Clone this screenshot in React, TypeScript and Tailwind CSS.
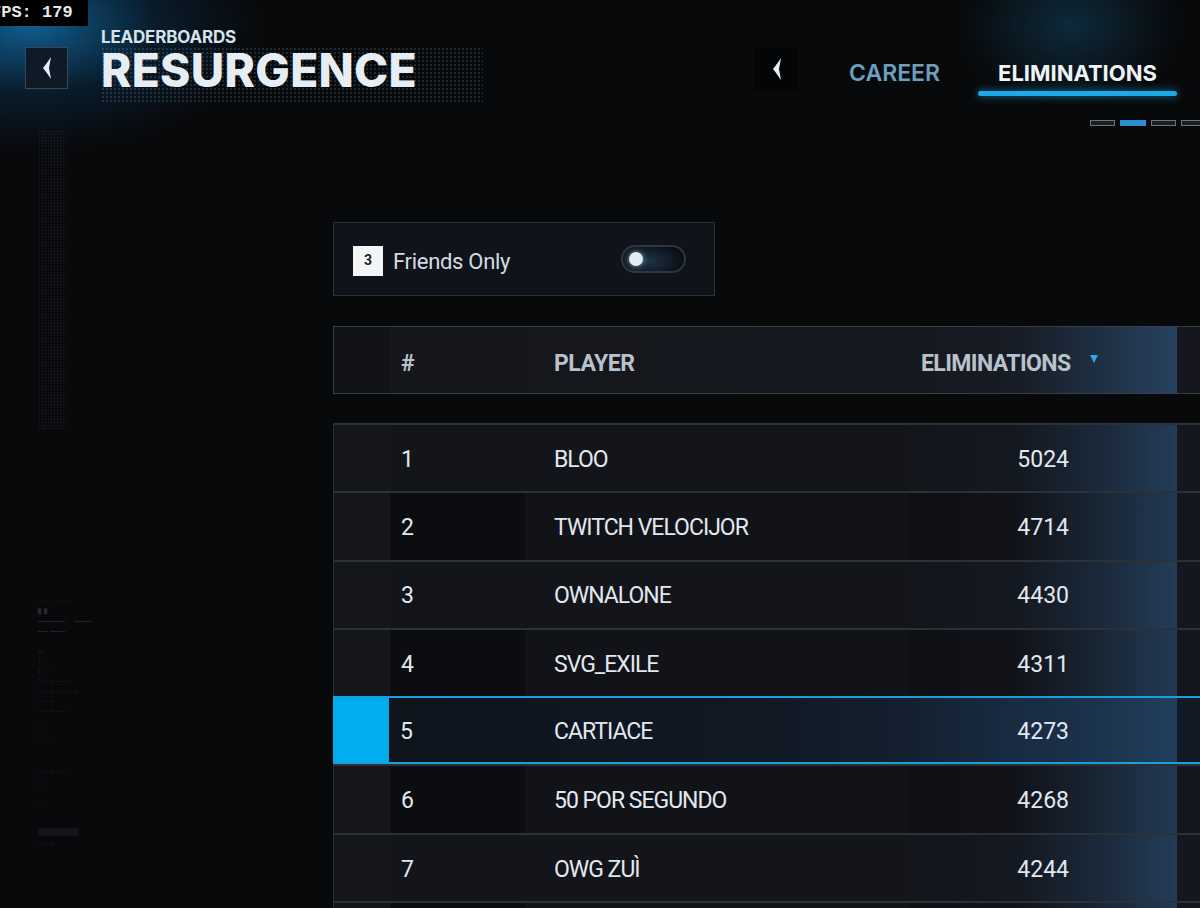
import React from "react";

const rows = [
  { n: "1", name: "BLOO", v: "5024" },
  { n: "2", name: "TWITCH VELOCIJOR", v: "4714" },
  { n: "3", name: "OWNALONE", v: "4430" },
  { n: "4", name: "SVG_EXILE", v: "4311" },
  { n: "5", name: "CARTIACE", v: "4273", sel: true },
  { n: "6", name: "50 POR SEGUNDO", v: "4268" },
  { n: "7", name: "OWG ZUÌ", v: "4244" },
  { n: "8", name: "", v: "" },
];

function Chevron() {
  return (
    <svg width="12" height="24" viewBox="0 0 12 24">
      <path d="M10 1 Q6 7 2 12 Q6 17 10 23 L8 12 Z" fill="#e6eef4" />
    </svg>
  );
}

function Row({ r, i }: { r: (typeof rows)[number]; i: number }) {
  const even = i % 2 === 1;
  if (r.sel) {
    return (
      <div className="flex h-[68.3px] w-[890px] border-y-2 border-[#1a9fdc] bg-[linear-gradient(90deg,#0e131b_0%,#111925_50%,#16273a_80%,#1d3650_100%)]">
        <div className="w-[57px] shrink-0 bg-[#00aef0] border-r border-[#0a0c10]" />
        <div className="w-[135px] shrink-0 flex items-center pl-[10px] pt-[4px] text-[23px] text-[#e2e8ef] tracking-[-0.5px]">{r.n}</div>
        <div className="w-[383px] shrink-0 flex items-center pl-[29px] pt-[4px] text-[23px] text-[#e2e8ef] tracking-[-1px]">{r.name}</div>
        <div className="w-[269px] shrink-0 flex items-center justify-end pr-[108px] pt-[4px] text-[23px] text-[#e2e8ef] bg-[linear-gradient(90deg,rgba(20,34,50,0)_0%,rgba(30,58,88,0.5)_70%,rgba(36,68,100,0.7)_100%)]">{r.v}</div>
        <div className="flex-1 bg-[#121a26]" />
      </div>
    );
  }
  return (
    <div className="flex h-[68.3px] w-[890px] border-t-2 border-[#2c3037] border-l border-l-[#2a2d33]">
      <div className="w-[56px] shrink-0 bg-[#14161c]" />
      <div className={`w-[135px] shrink-0 flex items-center pl-[11px] pt-[4px] text-[23px] text-[#e2e8ef] tracking-[-0.5px] ${even ? "bg-[#0c0d11]" : "bg-[#13151b]"}`}>{r.n}</div>
      <div className={`w-[383px] shrink-0 flex items-center pl-[29px] pt-[4px] text-[23px] text-[#e2e8ef] tracking-[-1px] ${even ? "bg-[#121318]" : "bg-[#13151b]"}`}>{r.name}</div>
      <div className={`w-[269px] shrink-0 flex items-center justify-end pr-[108px] pt-[4px] text-[23px] text-[#e2e8ef] ${even ? "bg-[linear-gradient(90deg,#0e0f13_0%,#111319_40%,#1a2838_75%,#223a55_100%)]" : "bg-[linear-gradient(90deg,#13151b_0%,#141820_40%,#1b2b3d_75%,#233d58_100%)]"}`}>{r.v}</div>
      <div className="flex-1 bg-[#15171e]" />
    </div>
  );
}

export default function App() {
  return (
    <div className="relative w-[1200px] h-[908px] overflow-hidden bg-[#08090b] bg-[image:radial-gradient(ellipse_230px_125px_at_30px_25px,rgba(18,108,168,0.85),rgba(10,60,100,0.35)_55%,transparent_100%),radial-gradient(ellipse_110px_80px_at_1070px_25px,rgba(24,110,160,0.32),transparent_100%)] font-['Roboto',sans-serif]">
      {/* FPS overlay */}
      <div className="absolute top-0 left-0 w-[88px] h-[26px] bg-black overflow-hidden flex items-center">
        <span className="-ml-[9px] font-['Liberation_Mono',monospace] font-bold text-[17px] text-[#e8e8e8] whitespace-nowrap">FPS: 179</span>
      </div>

      {/* Header */}
      <div className="flex h-[130px]">
        <div className="pl-[25px] pt-[47px]">
          <div className="w-[43px] h-[42px] border border-[#3b4656] bg-[#0f1a26] flex items-center justify-center">
            <Chevron />
          </div>
        </div>
        <div className="ml-[33px] pt-[29px] font-['Inter',sans-serif]">
          <div className="text-[17px] leading-[17px] font-bold text-[#d6e2ec] tracking-[-0.2px]">LEADERBOARDS</div>
          <div className="mt-[1px] w-[382px] pb-[10px] bg-[image:radial-gradient(circle,rgba(130,170,200,0.2)_0.8px,transparent_1.2px)] bg-[length:4px_4px]">
            <div className="inline-block text-[46px] leading-[46px] font-extrabold text-[#e6eef4] tracking-[0.3px]">RESURGENCE</div>
          </div>
        </div>
        <div className="ml-auto pt-[47px] pr-[23px] flex font-['Inter',sans-serif]">
          <div className="w-[43px] h-[44px] bg-[#040506] flex items-center justify-center">
            <Chevron />
          </div>
          <div className="ml-[51px] pt-[15px] text-[23px] leading-[23px] font-semibold text-[#6b9fbf]">CAREER</div>
          <div className="ml-[38px] w-[199px] pt-[15px] flex flex-col">
            <div className="text-center text-[22px] leading-[23px] font-bold text-[#eef3f7]">ELIMINATIONS</div>
            <div className="mt-[6px] h-[5px] rounded-full bg-[#1ba9ea] shadow-[0_0_8px_rgba(27,169,234,0.7)]" />
            <div className="mt-[24px] ml-[112px] flex gap-[5px]">
              <div className="w-[25px] h-[6px] shrink-0 border border-[#6c737c] bg-[#1a1e24]" />
              <div className="w-[26px] h-[6px] shrink-0 bg-[#2f8fcc]" />
              <div className="w-[25px] h-[6px] shrink-0 border border-[#6c737c] bg-[#1a1e24]" />
              <div className="w-[25px] h-[6px] shrink-0 border border-[#6c737c] bg-[#1a1e24]" />
            </div>
          </div>
        </div>
      </div>

      {/* Body */}
      <div className="flex">
        <div className="w-[333px] shrink-0 pl-[38px]">
          <div className="w-[28px] h-[300px] opacity-30 bg-[image:radial-gradient(circle,rgba(120,150,170,0.35)_0.7px,transparent_1.2px)] bg-[length:3px_3px]" />
          <div className="mt-[168px] flex flex-col gap-[4px] text-[5px] leading-[6px] text-[#2a2c30] font-['DejaVu_Sans_Mono',monospace]">
            <div>— — — — — —</div>
            <div>█ █</div>
            <div>━━━━━━━━━ &nbsp; ━━━━━━</div>
            <div>━━━ ━━━━━</div>
            <div className="mt-[10px]">┌┐</div>
            <div>│</div>
            <div>│ &nbsp; ·</div>
            <div>└ ─ ─ ─ ─ ─</div>
            <div>· ─ ─ ─ ─ ─ ─</div>
            <div>· ─ ─</div>
            <div>· ─ ─ ─ ─</div>
            <div>·</div>
            <div>·</div>
            <div>· · ·</div>
            <div className="mt-[20px]">· ─ ─ ─ ─</div>
            <div>·</div>
            <div>·</div>
            <div>·</div>
            <div className="mt-[20px] w-[40px] h-[8px] bg-[#141518]" />
            <div>─ ─ ─</div>
          </div>
        </div>

        <div className="flex flex-col shrink-0">
          {/* Friends only */}
          <div className="mt-[92px] w-[382px] h-[74px] border border-[#2b2f37] bg-[#11131a] flex items-center pl-[19px]">
            <div className="mt-[3px] w-[30px] h-[30px] bg-[#f4f5f6] flex items-center justify-center text-[14px] font-bold text-[#1c1e22]">3</div>
            <div className="ml-[10px] pt-[4px] text-[22px] text-[#d3dbe3] tracking-[-0.3px]">Friends Only</div>
            <div className="ml-auto mr-[28px] w-[65px] h-[28px] rounded-full border-2 border-[#30353d] bg-[radial-gradient(ellipse_40px_20px_at_25px_14px,#1d3446,#070a0e)] flex items-center pl-[6px]">
              <div className="w-[14px] h-[14px] rounded-full bg-[#e2ecf3] shadow-[0_0_6px_rgba(200,230,255,0.6)]" />
            </div>
          </div>

          {/* Table header */}
          <div className="mt-[30px] flex h-[68px] w-[890px] border border-[#3a3e46]">
            <div className="w-[56px] shrink-0 bg-[#101217]" />
            <div className="w-[135px] shrink-0 flex items-center pl-[11px] pt-[8px] text-[23px] font-bold text-[#b9c2cb] bg-[#15171d]">#</div>
            <div className="w-[383px] shrink-0 flex items-center pl-[29px] pt-[8px] text-[23px] font-bold text-[#b9c2cb] tracking-[-0.5px] bg-[linear-gradient(90deg,#15171d,#16181f)]">PLAYER</div>
            <div className="w-[269px] shrink-0 flex items-center pl-[13px] pt-[8px] text-[23px] font-bold text-[#b9c2cb] tracking-[-0.6px] bg-[linear-gradient(90deg,#16181f_0%,#171c25_40%,#1f3246_75%,#27425e_100%)]">
              ELIMINATIONS
              <svg width="8" height="8" viewBox="0 0 8 8" className="ml-[19px] -mt-[10px]">
                <path d="M0 0 H8 L4 8 Z" fill="#3aa3e6" />
              </svg>
            </div>
            <div className="flex-1 bg-[#16171e]" />
          </div>

          {/* Rows */}
          <div className="mt-[29px] flex flex-col">
            {rows.map((r, i) => (
              <Row key={i} r={r} i={i} />
            ))}
          </div>
        </div>
      </div>
    </div>
  );
}
